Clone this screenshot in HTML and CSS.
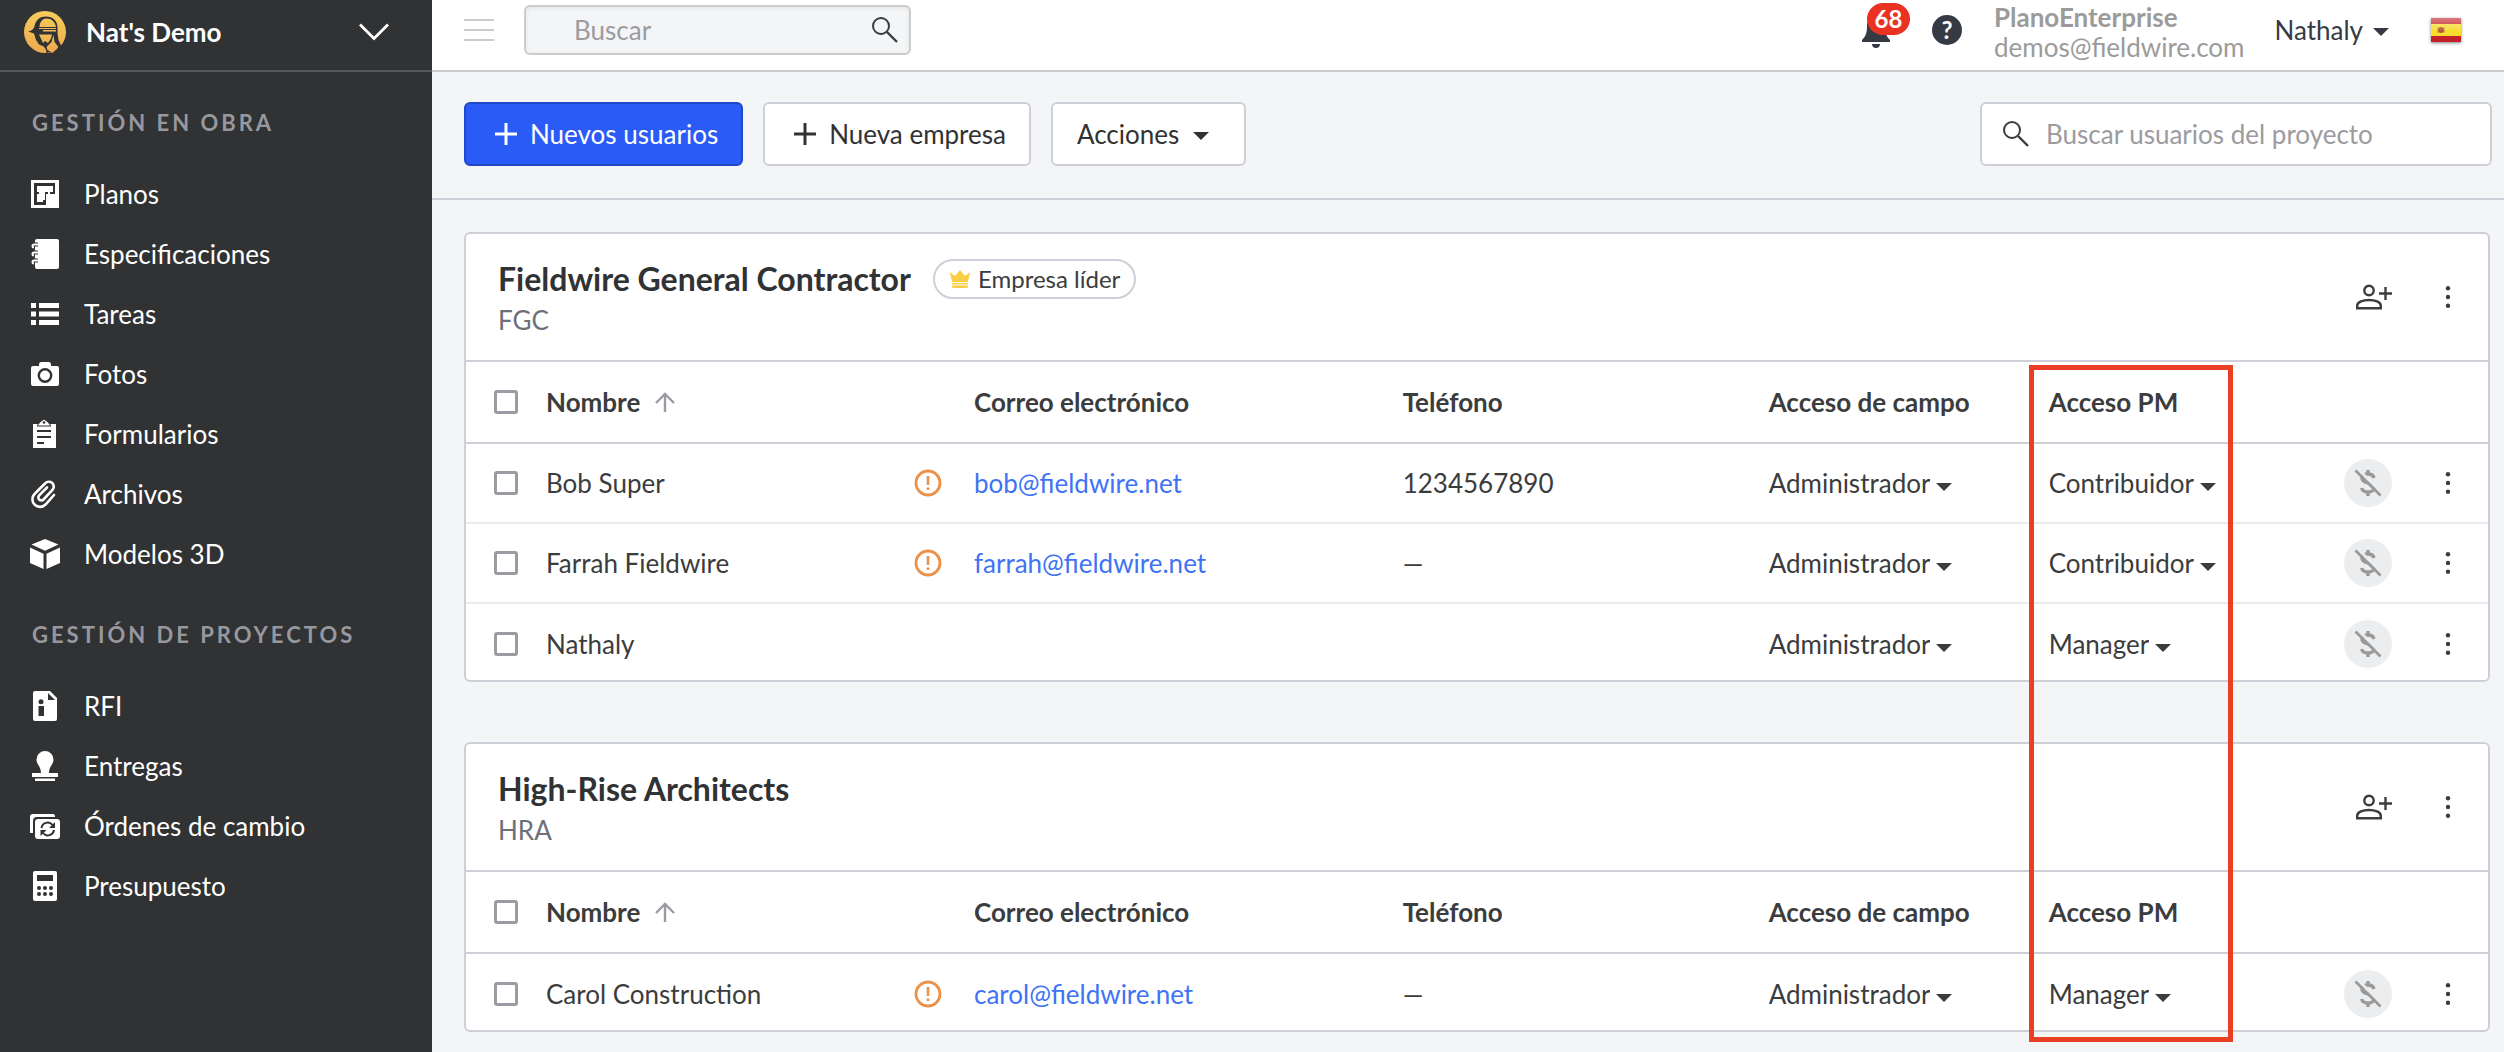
FILE: index.html
```html
<!DOCTYPE html>
<html lang="es">
<head>
    <meta charset="UTF-8">
    <meta name="viewport" content="width=device-width, initial-scale=1.0">
    <title>Nat's Demo - Usuarios</title>
    <link rel="stylesheet" href="styles.css">
</head>
<body>
    <!-- shared icons -->
    <svg class="sprite" aria-hidden="true">
        <symbol id="search" viewBox="0 0 28 28">
            <circle cx="10" cy="10" r="8" fill="none" stroke="currentColor" stroke-width="2"/>
            <path d="M16 16l10 10" fill="none" stroke="currentColor" stroke-width="2.4"/>
        </symbol>
        <symbol id="plus" viewBox="0 0 22 22">
            <path d="M11 0v22M0 11h22" stroke="currentColor" stroke-width="3"/>
        </symbol>
        <symbol id="arrow-up" viewBox="0 0 20 20">
            <path d="M10 20V1M1 11l9-9 9 9" fill="none" stroke="currentColor" stroke-width="2.4"/>
        </symbol>
        <symbol id="warning" viewBox="0 0 28 28">
            <circle cx="14" cy="14" r="12" fill="none" stroke="currentColor" stroke-width="2.8"/>
            <path d="M14 7v9M14 18.500v2.500" stroke="currentColor" stroke-width="2.600"/>
        </symbol>
        <symbol id="dots" viewBox="0 0 24 24">
            <circle cx="12" cy="3.300" r="2.200"/>
            <circle cx="12" cy="12" r="2.200"/>
            <circle cx="12" cy="20.700" r="2.200"/>
        </symbol>
        <symbol id="add-user" viewBox="0 0 36 26">
            <circle cx="13" cy="6.500" r="4.700" fill="none" stroke="currentColor" stroke-width="2.400"/>
            <path d="M1.200 24.200v-2.500c0-3.800 6-5.700 11.800-5.700s11.800 1.900 11.800 5.700v2.500z" fill="none" stroke="currentColor" stroke-width="2.400"/>
            <path d="M29.500 3v13M23 9.500h13" stroke="currentColor" stroke-width="2.400"/>
        </symbol>
        <symbol id="no-dollar" viewBox="0 0 28 28">
            <path d="M14 1v4M14 23v4M20 9c-.7-2.800-3-4-6-4-3.500 0-6 1.600-6 4.300 0 6 12 3.300 12 9.400 0 2.700-2.500 4.300-6 4.300-3.200 0-5.700-1.300-6.300-4" fill="none" stroke="currentColor" stroke-width="3.4"/>
            <path d="M3.500 -.5l25 25" stroke="#ecedef" stroke-width="3"/>
            <path d="M1.500 1.500l25 25" stroke="currentColor" stroke-width="2.600"/>
        </symbol>
    </svg>

    <div class="app">
        <aside class="sidebar">
            <button class="project">
                <svg class="logo" viewBox="0 0 42 42">
                    <defs>
                        <linearGradient id="gold" gradientUnits="userSpaceOnUse" x1="0" y1="0" x2="0" y2="42">
                            <stop offset="0" stop-color="#f6cd5b"/>
                            <stop offset="1" stop-color="#eda94f"/>
                        </linearGradient>
                    </defs>
                    <circle cx="21" cy="21" r="21" fill="url(#gold)"/>
                    <path d="M4 20.500c4-1 6-2.500 6.500-5.500C12 8.500 16 5.500 22 5.500c7 0 11.500 4.500 11.500 11V22l1 7 3 6.500-3 3-5.500-3.500-1.500 5.500-5 1.500c0-4-2-6.500-5-7.500-4-1-3-3-5.500-5.500L10 22.500z" fill="#313233"/>
                    <path d="M15.500 16c.5-5.500 3-8.500 7-8.500 5 0 8.500 3 9.500 8.500zM15 17h17v1H15zM19 19h13v1.500H19z" fill="url(#gold)"/>
                    <path d="M15 23.500h13l-1 4-3 4.500-3-2-2 2zM29.500 24l1 7 4 5-6 6-5-3-1-3 5-5z" fill="url(#gold)"/>
                </svg>
                <span>Nat's Demo</span>
                <svg class="chevron" viewBox="0 0 30 18"><path d="M1 1.500l14 14 14-14" fill="none" stroke="#fff" stroke-width="2.800"/></svg>
            </button>

            <nav>
                <h2>GESTIÓN EN OBRA</h2>
                <ul>
                    <li><a href="#">
                        <svg viewBox="0 0 30 30"><path fill-rule="evenodd" d="M1 1h28v28H1zM4 4v22h12V15h2v-2h-3v8h-2v2H7V13h2v2H7v-4h0V7h16v6h-3v2h5V4z"/><path d="M8 8h14v4h-7v9H8v-6h2v-3H8z"/></svg>
                        Planos</a></li>
                    <li><a href="#">
                        <svg viewBox="0 0 30 30"><path d="M7 0h20a2 2 0 0 1 2 2v26a2 2 0 0 1-2 2H7a2 2 0 0 1-2-2V2a2 2 0 0 1 2-2z"/><path d="M8 5.500H4a1.800 1.800 0 0 0 0 3.500M8 13.500H4A1.800 1.800 0 0 0 4 17M8 21.500H4A1.800 1.800 0 0 0 4 25" fill="none" stroke="#313233" stroke-width="4"/><path d="M8 5.500H4a1.500 1.500 0 0 0 0 3M8 13.500H4a1.500 1.500 0 0 0 0 3M8 21.500H4a1.500 1.500 0 0 0 0 3" fill="none" stroke="#fff" stroke-width="2"/></svg>
                        Especificaciones</a></li>
                    <li><a href="#">
                        <svg viewBox="0 0 30 30"><path d="M1 4h5v5H1zM9 4h20v5H9zM1 12.500h5v5H1zM9 12.500h20v5H9zM1 21h5v5H1zM9 21h20v5H9z"/></svg>
                        Tareas</a></li>
                    <li><a href="#">
                        <svg viewBox="0 0 30 30"><path d="M3 7h6V5.500A2.500 2.500 0 0 1 11 3h8a2.500 2.500 0 0 1 2 2.500V7h6a2 2 0 0 1 2 2v16a2 2 0 0 1-2 2H3a2 2 0 0 1-2-2V9a2 2 0 0 1 2-2z"/><circle cx="15" cy="16.500" r="6.200" fill="none" stroke="#313233" stroke-width="2.400"/></svg>
                        Fotos</a></li>
                    <li><a href="#">
                        <svg viewBox="0 0 30 30"><path d="M4 5h22v24H3V5z"/><path d="M7 7h14l-3-4-4-3-4 3z" stroke="#313233"/><circle cx="14" cy="3.500" r="1.300" fill="#313233"/><path d="M7 12h14M7 18h14M7 24h7" stroke="#313233" stroke-width="2"/></svg>
                        Formularios</a></li>
                    <li><a href="#">
                        <svg viewBox="0 0 30 30"><path d="M24 16l-8.500 9.500a7.500 7.500 0 0 1-11-10.500L15 4.500a5 5 0 0 1 8.500 1.500c.8 2-.2 4-1.500 5.500l-8.500 9a3 3 0 0 1-4.300-4.200L17 8.500" fill="none" stroke="#fff" stroke-width="2.600" stroke-linecap="round"/></svg>
                        Archivos</a></li>
                    <li><a href="#">
                        <svg viewBox="0 0 30 30"><path d="M15 0l13.500 5.500L15 11.800 1.500 5.500zM0 8.500l13.500 6.300V30L0 24zM30 8.500l-13.500 6.300V30L30 24z"/></svg>
                        Modelos 3D</a></li>
                </ul>
                <h2>GESTIÓN DE PROYECTOS</h2>
                <ul>
                    <li><a href="#">
                        <svg viewBox="0 0 30 30"><path d="M5 0h15l7 7v21a2 2 0 0 1-2 2H5a2 2 0 0 1-2-2V2a2 2 0 0 1 2-2z"/><path d="M18 2v7h7zM8.500 15H14v10H8.500z" fill="#313233"/><circle cx="11" cy="10.800" r="2.500" fill="#313233"/></svg>
                        RFI</a></li>
                    <li><a href="#">
                        <svg viewBox="0 0 30 30"><path d="M15 0a8.500 8.500 0 0 1 8.500 8.500c0 5-4.500 7-4.500 13.500h8.500a.8.8 0 0 1 .5.800V26H2v-3.200a.8.800 0 0 1 .5-.8H11c0-6.500-4.500-8.500-4.500-13.500A8.500 8.500 0 0 1 15 0zM5 27.500h20V30H5z"/></svg>
                        Entregas</a></li>
                    <li><a href="#">
                        <svg viewBox="0 0 30 30"><path d="M3 3h20a2 2 0 0 1 2 2v1H7a4 4 0 0 0-4 4v12H0V6a3 3 0 0 1 3-3z"/><path d="M8 8h19a3 3 0 0 1 3 3v14a3 3 0 0 1-3 3H8a3 3 0 0 1-3-3V11a3 3 0 0 1 3-3z"/><path d="M11.500 17a6.200 6.200 0 0 1 11-3M24 19a6.200 6.200 0 0 1-11 3" fill="none" stroke="#313233" stroke-width="2"/><path d="M25 11v6h-6zM10.500 25v-6h6z" fill="#313233"/></svg>
                        Órdenes de cambio</a></li>
                    <li><a href="#">
                        <svg viewBox="0 0 30 30"><path d="M5 0h20a2 2 0 0 1 2 2v26a2 2 0 0 1-2 2H5a2 2 0 0 1-2-2V2a2 2 0 0 1 2-2z"/><path d="M7 4h16v6H7z" fill="#313233"/><g fill="#313233"><circle cx="9" cy="17" r="2"/><circle cx="15" cy="17" r="2"/><circle cx="21" cy="17" r="2"/><circle cx="9" cy="23" r="2"/><circle cx="15" cy="23" r="2"/><circle cx="21" cy="23" r="2"/></g></svg>
                        Presupuesto</a></li>
                </ul>
            </nav>
        </aside>

        <div class="content">
            <header class="topbar">
                <button class="menu" aria-label="Menú">
                    <svg viewBox="0 0 30 22"><path d="M0 1h30M0 11h30M0 21h30" stroke="#ccc" stroke-width="2"/></svg>
                </button>
                <form class="global-search">
                    <input type="search" placeholder="Buscar" aria-label="Buscar">
                    <svg class="icon"><use href="#search"/></svg>
                </form>
                <div class="account">
                    <button class="bell" aria-label="Notificaciones">
                        <svg viewBox="0 0 28 32"><path d="M14 0C8 0 5 4 5 10c0 8-2 11-5 14v2h28v-2c-3-3-5-6-5-14 0-6-3-10-9-10zM10 28h8c0 2.500-1.500 4-4 4s-4-1.500-4-4z" fill="#363a45"/></svg>
                        <span class="badge">68</span>
                    </button>
                    <button class="help" aria-label="Ayuda">?</button>
                    <div class="plan">
                        <strong>PlanoEnterprise</strong>
                        <span>demos@fieldwire.com</span>
                    </div>
                    <button class="user caret">Nathaly</button>
                    <button class="flag" aria-label="Español">
                        <svg viewBox="0 0 30 24">
                            <defs>
                                <linearGradient id="shine" x1="0" y1="0" x2="0" y2="1">
                                    <stop offset="0" stop-color="#fff" stop-opacity=".4"/>
                                    <stop offset=".5" stop-color="#fff" stop-opacity=".1"/>
                                    <stop offset=".5" stop-color="#fff" stop-opacity="0"/>
                                </linearGradient>
                            </defs>
                            <path d="M0 0h30v24H0z" fill="#c4202a"/>
                            <path d="M0 6h30v12H0z" fill="#f8dc2e"/>
                            <path d="M6 9h2v6H6zM12 9h2v6h-2z" fill="#d9b44a"/>
                            <circle cx="10" cy="12" r="3" fill="#b5562c"/>
                            <path d="M0 0h30v24H0z" fill="url(#shine)"/>
                        </svg>
                    </button>
                </div>
            </header>

            <div class="toolbar">
                <button class="btn primary"><svg><use href="#plus"/></svg>Nuevos usuarios</button>
                <button class="btn"><svg><use href="#plus"/></svg>Nueva empresa</button>
                <button class="btn actions-menu caret">Acciones</button>
                <form class="user-search">
                    <svg class="icon"><use href="#search"/></svg>
                    <input type="search" placeholder="Buscar usuarios del proyecto" aria-label="Buscar usuarios del proyecto">
                </form>
            </div>

            <main class="companies">
                <section class="card">
                    <div class="card-header">
                        <div>
                            <div class="title">
                                <h1>Fieldwire General Contractor</h1>
                                <span class="lead">
                                    <svg viewBox="0 0 20 18"><path d="M0 2l5 4 5-6 5 6 5-4-2 10H2zM2 13h16v1.500H2zM2 15.500h16V17l-1 1H3l-1-1z" fill="#f8ce46"/></svg>
                                    Empresa líder
                                </span>
                            </div>
                            <p>FGC</p>
                        </div>
                        <div class="row-actions">
                            <button class="add-user" aria-label="Añadir usuario"><svg><use href="#add-user"/></svg></button>
                            <button class="more" aria-label="Más"><svg><use href="#dots"/></svg></button>
                        </div>
                    </div>
                    <table>
                        <colgroup>
                            <col class="col-check"><col class="col-name"><col class="col-warning"><col class="col-email"><col class="col-phone"><col class="col-access"><col class="col-access"><col>
                        </colgroup>
                        <thead>
                            <tr>
                                <th><input type="checkbox" aria-label="Seleccionar todos"></th>
                                <th>Nombre <svg class="sort"><use href="#arrow-up"/></svg></th>
                                <th></th>
                                <th>Correo electrónico</th>
                                <th>Teléfono</th>
                                <th>Acceso de campo</th>
                                <th>Acceso PM</th>
                                <th></th>
                            </tr>
                        </thead>
                        <tbody>
                            <tr>
                                <td><input type="checkbox" aria-label="Bob Super"></td>
                                <td>Bob Super</td>
                                <td><svg class="warning"><use href="#warning"/></svg></td>
                                <td><a href="#">bob@fieldwire.net</a></td>
                                <td>1234567890</td>
                                <td><span class="access caret"><select aria-label="Acceso de campo"><option>Administrador</option></select></span></td>
                                <td><span class="access caret"><select aria-label="Acceso PM"><option>Contribuidor</option><option>Manager</option></select></span></td>
                                <td><div class="row-actions">
                                    <button class="no-cost" aria-label="Costos"><svg><use href="#no-dollar"/></svg></button>
                                    <button class="more" aria-label="Más"><svg><use href="#dots"/></svg></button>
                                </div></td>
                            </tr>
                            <tr>
                                <td><input type="checkbox" aria-label="Farrah Fieldwire"></td>
                                <td>Farrah Fieldwire</td>
                                <td><svg class="warning"><use href="#warning"/></svg></td>
                                <td><a href="#">farrah@fieldwire.net</a></td>
                                <td>—</td>
                                <td><span class="access caret"><select aria-label="Acceso de campo"><option>Administrador</option></select></span></td>
                                <td><span class="access caret"><select aria-label="Acceso PM"><option>Contribuidor</option><option>Manager</option></select></span></td>
                                <td><div class="row-actions">
                                    <button class="no-cost" aria-label="Costos"><svg><use href="#no-dollar"/></svg></button>
                                    <button class="more" aria-label="Más"><svg><use href="#dots"/></svg></button>
                                </div></td>
                            </tr>
                            <tr>
                                <td><input type="checkbox" aria-label="Nathaly"></td>
                                <td>Nathaly</td>
                                <td></td>
                                <td></td>
                                <td></td>
                                <td><span class="access caret"><select aria-label="Acceso de campo"><option>Administrador</option></select></span></td>
                                <td><span class="access caret"><select aria-label="Acceso PM"><option>Manager</option><option>Contribuidor</option></select></span></td>
                                <td><div class="row-actions">
                                    <button class="no-cost" aria-label="Costos"><svg><use href="#no-dollar"/></svg></button>
                                    <button class="more" aria-label="Más"><svg><use href="#dots"/></svg></button>
                                </div></td>
                            </tr>
                        </tbody>
                    </table>
                </section>

                <section class="card">
                    <div class="card-header">
                        <div>
                            <div class="title">
                                <h1>High-Rise Architects</h1>
                            </div>
                            <p>HRA</p>
                        </div>
                        <div class="row-actions">
                            <button class="add-user" aria-label="Añadir usuario"><svg><use href="#add-user"/></svg></button>
                            <button class="more" aria-label="Más"><svg><use href="#dots"/></svg></button>
                        </div>
                    </div>
                    <table>
                        <colgroup>
                            <col class="col-check"><col class="col-name"><col class="col-warning"><col class="col-email"><col class="col-phone"><col class="col-access"><col class="col-access"><col>
                        </colgroup>
                        <thead>
                            <tr>
                                <th><input type="checkbox" aria-label="Seleccionar todos"></th>
                                <th>Nombre <svg class="sort"><use href="#arrow-up"/></svg></th>
                                <th></th>
                                <th>Correo electrónico</th>
                                <th>Teléfono</th>
                                <th>Acceso de campo</th>
                                <th>Acceso PM</th>
                                <th></th>
                            </tr>
                        </thead>
                        <tbody>
                            <tr>
                                <td><input type="checkbox" aria-label="Carol Construction"></td>
                                <td>Carol Construction</td>
                                <td><svg class="warning"><use href="#warning"/></svg></td>
                                <td><a href="#">carol@fieldwire.net</a></td>
                                <td>—</td>
                                <td><span class="access caret"><select aria-label="Acceso de campo"><option>Administrador</option></select></span></td>
                                <td><span class="access caret"><select aria-label="Acceso PM"><option>Manager</option><option>Contribuidor</option></select></span></td>
                                <td><div class="row-actions">
                                    <button class="no-cost" aria-label="Costos"><svg><use href="#no-dollar"/></svg></button>
                                    <button class="more" aria-label="Más"><svg><use href="#dots"/></svg></button>
                                </div></td>
                            </tr>
                        </tbody>
                    </table>
                </section>

                <!-- outline around the PM access column -->
                <div class="highlight"></div>
            </main>
        </div>
    </div>
</body>
</html>
```

FILE: styles.css
```css
* {
    box-sizing: border-box;
}
body {
    margin: 0;
    font-family: Lato, "Open Sans", sans-serif;
    font-size: 26px;
    line-height: 30px;
    color: #3b3c3d;
    background-color: #f4f5f7;
}
button, input, select {
    font: inherit;
    color: inherit;
}
button {
    padding: 0;
    border: none;
    background: none;
    cursor: pointer;
}
svg {
    display: block;
    flex: none;
    fill: currentColor;
}
h1, h2, p, ul {
    margin: 0;
    padding: 0;
}
.sprite {
    display: none;
}
.app {
    display: flex;
    min-height: 100vh;
}

/* sidebar */
.sidebar {
    flex: none;
    width: 432px;
    background-color: #313233;
    color: #fff;
}
.project {
    display: flex;
    align-items: center;
    width: 100%;
    height: 72px;
    padding: 0 43px 6px 24px;
    border-bottom: 2px solid #565758;
    font-weight: bold;
    text-align: left;
}
.project span {
    flex: 1;
    margin-left: 20px;
}
.logo {
    width: 42px;
    height: 42px;
}
.chevron {
    width: 30px;
    height: 18px;
}
.sidebar h2 {
    padding: 36px 32px 26px;
    font-size: 22px;
    letter-spacing: 3px;
    color: #97989f;
}
.sidebar ul {
    list-style: none;
}
.sidebar a {
    display: flex;
    align-items: center;
    gap: 24px;
    height: 60px;
    padding: 0 30px;
    color: #fff;
    text-decoration: none;
}
.sidebar a svg {
    width: 30px;
    height: 30px;
}

/* top bar */
.content {
    flex: 1;
    min-width: 0;
}
.topbar {
    display: flex;
    align-items: center;
    height: 72px;
    padding: 0 43px 10px 32px;
    border-bottom: 2px solid #ccc;
    background-color: #fff;
}
.menu svg {
    width: 30px;
    height: 22px;
}
.global-search {
    display: flex;
    align-items: center;
    width: 387px;
    height: 50px;
    margin-left: 30px;
    padding: 0 10px 0 48px;
    border: 2px solid #ccc;
    border-radius: 6px;
    background-color: #f4f5f7;
    box-shadow: inset 0 1px 4px rgba(0, 0, 0, 0.08);
}
input[type="search"] {
    flex: 1;
    min-width: 0;
    padding: 0;
    border: none;
    outline: none;
    background: none;
    appearance: none;
}
input::placeholder {
    color: #9b9ba0;
    opacity: 1;
}
.icon {
    width: 28px;
    height: 28px;
}
.account {
    display: flex;
    align-items: center;
    margin-left: auto;
    color: #363a45;
}
.bell {
    position: relative;
    padding-top: 4px;
}
.bell svg {
    width: 28px;
    height: 32px;
}
.badge {
    position: absolute;
    top: -9px;
    left: 5px;
    width: 43px;
    height: 32px;
    border-radius: 16px;
    background-color: #ea3223;
    color: #fff;
    font-size: 24px;
    line-height: 32px;
    font-weight: bold;
}
.help {
    width: 30px;
    height: 30px;
    margin-left: 42px;
    border-radius: 50%;
    background-color: #363a45;
    color: #fff;
    font-size: 24px;
    font-weight: bold;
}
.plan {
    display: flex;
    flex-direction: column;
    margin: 4px 30px 0 32px;
    color: #9b9b9b;
}
.user {
    color: #363a45;
}
.caret {
    display: inline-flex;
    align-items: center;
}
.caret::after {
    content: "";
    margin: 4px 0 0 10px;
    border: 8px solid transparent;
    border-top-color: currentColor;
    border-bottom: none;
}
.flag {
    margin-left: 42px;
    box-shadow: 0 1px 3px rgba(0, 0, 0, 0.5);
}
.flag svg {
    width: 30px;
    height: 24px;
}

/* toolbar */
.toolbar {
    display: flex;
    gap: 20px;
    padding: 30px 12px 32px 32px;
    border-bottom: 2px solid #cfd0d7;
}
.btn {
    display: flex;
    align-items: center;
    height: 64px;
    padding: 0 23px 0 29px;
    border: 2px solid #cfd0d7;
    border-radius: 6px;
    background-color: #fff;
    color: #313233;
}
.btn svg {
    width: 22px;
    height: 22px;
    margin-right: 13px;
}
.btn.primary {
    border-color: #1f49c9;
    background-color: #2a5bf7;
    color: #fff;
}
.actions-menu {
    padding: 0 35px 0 24px;
}
.actions-menu::after {
    margin-left: 14px;
}
.user-search {
    display: flex;
    align-items: center;
    gap: 16px;
    width: 512px;
    height: 64px;
    margin-left: auto;
    padding: 0 20px;
    border: 2px solid #cfd0d7;
    border-radius: 6px;
    background-color: #fff;
}

/* companies */
.companies {
    position: relative;
    display: flex;
    flex-direction: column;
    gap: 60px;
    margin: 32px 14px 20px 32px;
}
.card {
    border: 2px solid #cfd0d7;
    border-radius: 6px;
    background-color: #fff;
}
.card-header {
    display: flex;
    justify-content: space-between;
    align-items: center;
    height: 128px;
    padding-left: 32px;
    border-bottom: 2px solid #cfd0d7;
}
.title {
    display: flex;
    align-items: center;
    gap: 22px;
    height: 40px;
}
.title h1 {
    font-size: 32px;
    line-height: 40px;
    color: #313233;
}
.lead {
    display: flex;
    align-items: center;
    gap: 8px;
    height: 40px;
    padding: 0 14px 0 15px;
    border: 2px solid #cfd0d7;
    border-radius: 20px;
    font-size: 24px;
}
.lead svg {
    width: 20px;
    height: 18px;
}
.card-header p {
    margin-top: 6px;
    color: #6e7079;
}
.row-actions {
    display: flex;
    justify-content: flex-end;
    align-items: center;
    padding-right: 28px;
}
.add-user svg {
    width: 36px;
    height: 26px;
}
.more {
    margin-left: 44px;
}
.more svg {
    width: 24px;
    height: 24px;
}
.no-cost {
    display: flex;
    justify-content: center;
    align-items: center;
    width: 48px;
    height: 48px;
    border-radius: 50%;
    background-color: #ecedef;
    color: #999;
}
.no-cost svg {
    width: 28px;
    height: 28px;
}
table {
    width: 100%;
    table-layout: fixed;
    border-collapse: separate;
    border-spacing: 0;
}
.col-check {
    width: 80px;
}
.col-name {
    width: 18.2%;
}
.col-phone {
    width: 18.1%;
}
.col-warning {
    width: 60px;
}
.col-email {
    width: 21.2%;
}
.col-access {
    width: 13.85%;
}
th, td {
    height: 80px;
    padding: 0;
    border-bottom: 2px solid #ebebed;
    text-align: left;
}
th {
    height: 82px;
    border-bottom-color: #cfd0d7;
}
tbody tr:last-child td {
    height: 76px;
    padding-top: 4px;
    border-bottom: none;
}
td a {
    color: #3f73f5;
    text-decoration: none;
}
input[type="checkbox"] {
    display: block;
    width: 24px;
    height: 24px;
    margin: 0 0 0 28px;
    border: 3px solid #9b9ba3;
    border-radius: 3px;
    appearance: none;
}
.sort {
    display: inline-block;
    width: 20px;
    height: 20px;
    margin-left: 8px;
    color: #9b9ba3;
}
.warning {
    width: 28px;
    height: 28px;
    color: #ec9148;
}
.access select {
    field-sizing: content;
    padding: 0;
    border: none;
    outline: none;
    background: none;
    appearance: none;
}
.access::after {
    margin: 7px 0 0 6px;
}
.highlight {
    position: absolute;
    top: 133px;
    right: 257px;
    bottom: -10px;
    width: 204px;
    border: 5px solid #e94025;
    pointer-events: none;
}
```
